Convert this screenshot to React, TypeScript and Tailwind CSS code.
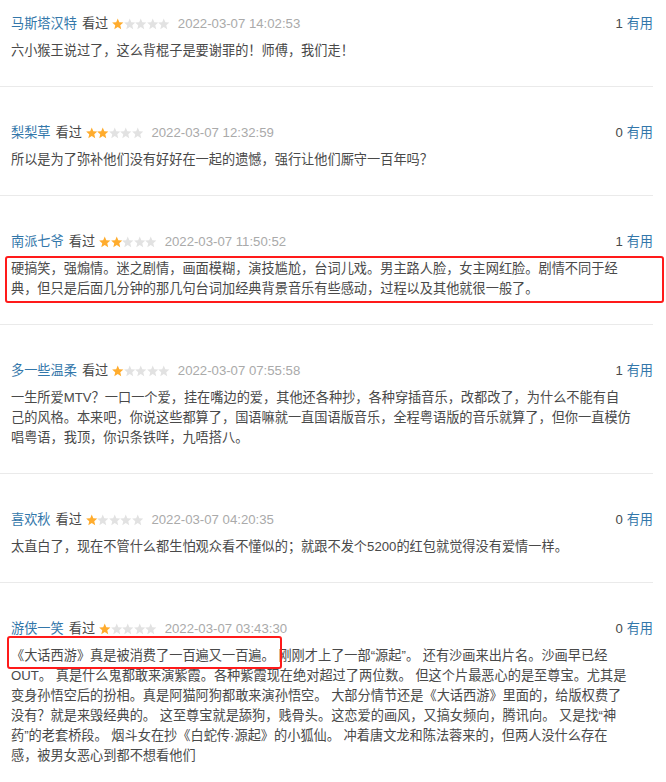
import React from 'react';

type Comment = {
  user: string;
  stars: number;
  time: string;
  useful: number;
  lines: string[];
};

const comments: Comment[] = [
  {
    user: '马斯塔汉特',
    stars: 1,
    time: '2022-03-07 14:02:53',
    useful: 1,
    lines: ['六小猴王说过了，这么背棍子是要谢罪的！师傅，我们走！'],
  },
  {
    user: '梨梨草',
    stars: 2,
    time: '2022-03-07 12:32:59',
    useful: 0,
    lines: ['所以是为了弥补他们没有好好在一起的遗憾，强行让他们厮守一百年吗？'],
  },
  {
    user: '南派七爷',
    stars: 2,
    time: '2022-03-07 11:50:52',
    useful: 1,
    lines: [
      '硬搞笑，强煽情。迷之剧情，画面模糊，演技尴尬，台词儿戏。男主路人脸，女主网红脸。剧情不同于经',
      '典，但只是后面几分钟的那几句台词加经典背景音乐有些感动，过程以及其他就很一般了。',
    ],
  },
  {
    user: '多一些温柔',
    stars: 1,
    time: '2022-03-07 07:55:58',
    useful: 1,
    lines: [
      '一生所爱MTV？一口一个爱，挂在嘴边的爱，其他还各种抄，各种穿插音乐，改都改了，为什么不能有自',
      '己的风格。本来吧，你说这些都算了，国语嘛就一直国语版音乐，全程粤语版的音乐就算了，但你一直模仿',
      '唱粤语，我顶，你识条铁咩，九唔搭八。',
    ],
  },
  {
    user: '喜欢秋',
    stars: 1,
    time: '2022-03-07 04:20:35',
    useful: 0,
    lines: ['太直白了，现在不管什么都生怕观众看不懂似的；就跟不发个5200的红包就觉得没有爱情一样。'],
  },
  {
    user: '游侠一笑',
    stars: 1,
    time: '2022-03-07 03:43:30',
    useful: 0,
    lines: [
      '《大话西游》真是被消费了一百遍又一百遍。 刚刚才上了一部“源起”。 还有沙画来出片名。沙画早已经',
      'OUT。 真是什么鬼都敢来演紫霞。各种紫霞现在绝对超过了两位数。 但这个片最恶心的是至尊宝。尤其是',
      '变身孙悟空后的扮相。真是阿猫阿狗都敢来演孙悟空。 大部分情节还是《大话西游》里面的，给版权费了',
      '没有？就是来毁经典的。 这至尊宝就是舔狗，贱骨头。这恋爱的画风，又搞女频向，腾讯向。 又是找“神',
      '药”的老套桥段。 烟斗女在抄《白蛇传·源起》的小狐仙。 冲着唐文龙和陈法蓉来的，但两人没什么存在',
      '感，被男女恶心到都不想看他们',
    ],
  },
];

function Star({ on }: { on: boolean }) {
  return (
    <svg width="11.5" height="12" viewBox="0 0 10 10">
      <polygon
        points="5,0.2 6.35,3.4 9.9,3.7 7.2,6 8,9.6 5,7.7 2,9.6 2.8,6 0.1,3.7 3.65,3.4"
        fill={on ? '#ffac2d' : '#e2e2e2'}
      />
    </svg>
  );
}

export default function App() {
  return (
    <div
      className="w-[666px] bg-white pr-[13px] text-[13.2px] text-[#494949]"
      style={{ fontFamily: "'Liberation Sans', 'Noto Sans CJK SC', sans-serif" }}
    >
      {comments.map((c, i) => (
        <div
          key={c.user}
          className={
            i === 0
              ? 'border-b border-[#eaeaea] pl-[11px] pt-[14px] pb-[25px]'
              : i === comments.length - 1
                ? 'pl-[11px] pt-[36px] pb-[25px]'
                : 'border-b border-[#eaeaea] pl-[11px] pt-[36px] pb-[25px]'
          }
        >
          <div className="flex h-5 items-center justify-between leading-5">
            <div className="flex items-center">
              <span className="text-[#3377aa]">{c.user}</span>
              <span className="ml-[5px]">看过</span>
              <span className="ml-[4px] flex items-center">
                {[0, 1, 2, 3, 4].map((s) => (
                  <Star key={s} on={s < c.stars} />
                ))}
              </span>
              <span className="ml-[8px] text-[#aaaaaa]">{c.time}</span>
            </div>
            <div>
              <span>{c.useful}</span> <span className="text-[#3377aa]">有用</span>
            </div>
          </div>
          <div className="relative mt-[7px] leading-5">
            {c.lines.map((l, j) => (
              <div key={j} className="whitespace-nowrap">
                {l}
              </div>
            ))}
            {i === 2 && (
              <div className="absolute top-[-3px] left-[-6px] right-[-11px] h-[47px] rounded-[3px] border-2 border-[#ff1a1a]" />
            )}
            {i === 5 && (
              <div className="absolute top-[-10px] left-[-4px] h-[33px] w-[275px] rounded-[3px] border-2 border-[#ff1a1a]" />
            )}
          </div>
        </div>
      ))}
    </div>
  );
}
